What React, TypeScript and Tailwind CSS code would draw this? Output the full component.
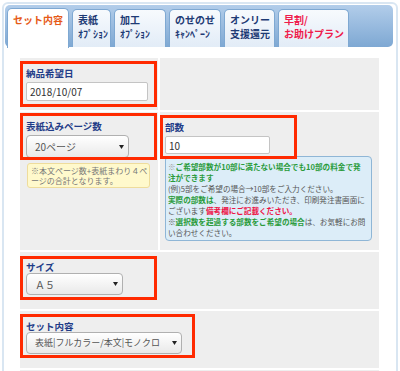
import type { ReactNode } from 'react'

const TABS = [
  { lines: ['セット内容'], w: 'w-[62px]', color: 'text-[#e65a17]', active: true },
  { lines: ['表紙', 'ｵﾌﾟｼｮﾝ'], w: 'w-[39px]', color: 'text-[#1e3b75]' },
  { lines: ['加工', 'ｵﾌﾟｼｮﾝ'], w: 'w-[52px]', color: 'text-[#1e3b75]' },
  { lines: ['のせのせ', 'ｷｬﾝﾍﾟｰﾝ'], w: 'w-[52px]', color: 'text-[#1e3b75]' },
  { lines: ['オンリー', '支援還元'], w: 'w-[51px]', color: 'text-[#1e3b75]' },
  { lines: ['早割/', 'お助けプラン'], w: 'w-[71px]', color: 'text-[#ef1b4b]' },
]

function Label({ children }: { children: ReactNode }) {
  return <div className="h-[12px] text-[9.5px] leading-[12px] font-bold text-[#1f3c88]">{children}</div>
}

function FakeSelect({ value, className }: { value: string; className: string }) {
  return (
    <div className={`flex items-center justify-between rounded-[4px] border border-[#b0b0b0] bg-linear-to-b from-white to-[#e9e9e9] pl-[8px] pr-[4px] text-[#555] ${className}`}>
      <span className="whitespace-nowrap">{value}</span>
      <svg width="5" height="4" viewBox="0 0 5 4" className="shrink-0">
        <path d="M0 0h5L2.5 4z" fill="#222" />
      </svg>
    </div>
  )
}

function FakeInput({ value, className }: { value: string; className: string }) {
  return (
    <div className={`flex items-center rounded-[2px] border border-[#c4c4c4] bg-white pl-[3px] text-[10px] text-[#333] ${className}`}>
      {value}
    </div>
  )
}

// red annotation frames drawn over the cells
function Mark({ className }: { className: string }) {
  return <div className={`pointer-events-none absolute left-0 border-[3px] border-[#ff2a00] ${className}`} />
}

const G = 'font-bold text-[#2a9b3b]'

export default function App() {
  return (
    <div className="h-[371px] overflow-hidden bg-white font-['Noto_Sans_CJK_JP','Noto_Sans',sans-serif]">
      <div className="m-[2px] w-[396px] rounded-[6px] border-2 border-[#d9e6f2] bg-white p-px">
        {/* Tab bar */}
        <div className="flex h-[42px] w-[388px] items-end gap-[3px] rounded-[5px] bg-linear-to-b from-[#b2cdea] to-[#7ea8d3] pl-[2px]">
          {TABS.map((t) =>
            t.active ? (
              <div
                key={t.lines[0]}
                className={`relative z-10 -mb-px h-[40px] ${t.w} rounded-t-[5px] border border-b-0 border-[#7ea8d2] bg-white pl-[5px] pt-[4px] text-[10px] leading-[14px] font-bold ${t.color}`}
              >
                {t.lines.map((l) => (
                  <div key={l} className="whitespace-nowrap">{l}</div>
                ))}
              </div>
            ) : (
              <div
                key={t.lines[0]}
                className={`h-[38px] ${t.w} rounded-t-[5px] border border-b-0 border-[#7ea8d2] bg-linear-to-b from-[#f7fafd] to-[#e2ecf7] pl-[5px] pt-[3px] text-[10px] leading-[14px] font-bold ${t.color}`}
              >
                {t.lines.map((l) => (
                  <div key={l} className="whitespace-nowrap">{l}</div>
                ))}
              </div>
            )
          )}
        </div>

        {/* Form table */}
        <div className="pl-[15px] pt-[11px]">
          <div className="flex w-[359px] flex-col gap-[2px]">
            {/* 納品希望日 */}
            <div className="flex h-[52px] gap-[2px]">
              <div className="relative w-[138px] bg-[#eeeeee] pl-[6px] pt-[9px]">
                <Label>納品希望日</Label>
                <FakeInput value="2018/10/07" className="mt-[3px] h-[19px] w-[122px]" />
                <Mark className="top-[3px] h-[46px] w-[137px]" />
              </div>
              <div className="flex-1 bg-[#eeeeee]" />
            </div>

            {/* ページ数 / 部数 */}
            <div className="flex h-[138px] gap-[2px]">
              <div className="relative w-[138px] bg-[#eeeeee] pl-[6px] pt-[8px]">
                <Label>表紙込みページ数</Label>
                <FakeSelect value="20ページ" className="mt-[3px] h-[23px] w-[103px] text-[10px]" />
                <div className="ml-px mt-[5px] h-[25px] w-[123px] rounded-[3px] border border-[#eedc9c] bg-[#fff9cc] pl-[3px] pt-[2px] text-[8px] leading-[10px] text-[#777]">
                  <div className="whitespace-nowrap">※本文ページ数+表紙まわり４ペ</div>
                  <div className="whitespace-nowrap">ージの合計となります。</div>
                </div>
                <Mark className="top-px h-[47px] w-[137px]" />
              </div>
              <div className="relative flex-1 bg-[#eeeeee] pl-[5px] pt-[9px]">
                <Label>部数</Label>
                <FakeInput value="10" className="mt-[3px] h-[18px] w-[105px]" />
                <div className="mt-[2px] h-[85px] w-[207px] rounded-[4px] border border-[#8fb6d6] bg-[#dcedf8] pl-[2px] pt-[4px] text-[7.6px] leading-[11px] text-[#555]">
                  <div className="whitespace-nowrap">
                    <span className="text-[#999]">※</span>
                    <span className={G}>ご希望部数が10部に満たない場合でも10部の料金で発</span>
                  </div>
                  <div className={`whitespace-nowrap ${G}`}>注ができます</div>
                  <div className="whitespace-nowrap">(例)5部をご希望の場合→10部をご入力ください。</div>
                  <div className="whitespace-nowrap">
                    <span className={G}>実際の部数は</span>、発注にお進みいただき、印刷発注書画面に
                  </div>
                  <div className="whitespace-nowrap">
                    ございます<span className="font-bold text-[#ee1144]">備考欄にご記載ください。</span>
                  </div>
                  <div className="whitespace-nowrap">
                    ※<span className={G}>選択数を超過する部数をご希望の場合</span>は、お気軽にお問
                  </div>
                  <div className="whitespace-nowrap">い合わせください。</div>
                </div>
                <Mark className="top-[3px] h-[44px] w-[137px]" />
              </div>
            </div>

            {/* サイズ */}
            <div className="relative h-[57px] bg-[#eeeeee] pl-[6px] pt-[9px]">
              <Label>サイズ</Label>
              <FakeSelect value="Ａ５" className="h-[22px] w-[97px] text-[10px]" />
              <Mark className="top-[4px] h-[44px] w-[137px]" />
            </div>

            {/* セット内容 */}
            <div className="relative h-[57px] bg-[#eeeeee] pl-[6px] pt-[9px]">
              <Label>セット内容</Label>
              <FakeSelect value="表紙|フルカラー/本文|モノクロ" className="h-[22px] w-[156px] text-[9px]" />
              <Mark className="top-[3px] h-[44px] w-[175px]" />
            </div>

            <div className="h-[3px] bg-[#eeeeee]" />
          </div>
        </div>
      </div>
    </div>
  )
}
